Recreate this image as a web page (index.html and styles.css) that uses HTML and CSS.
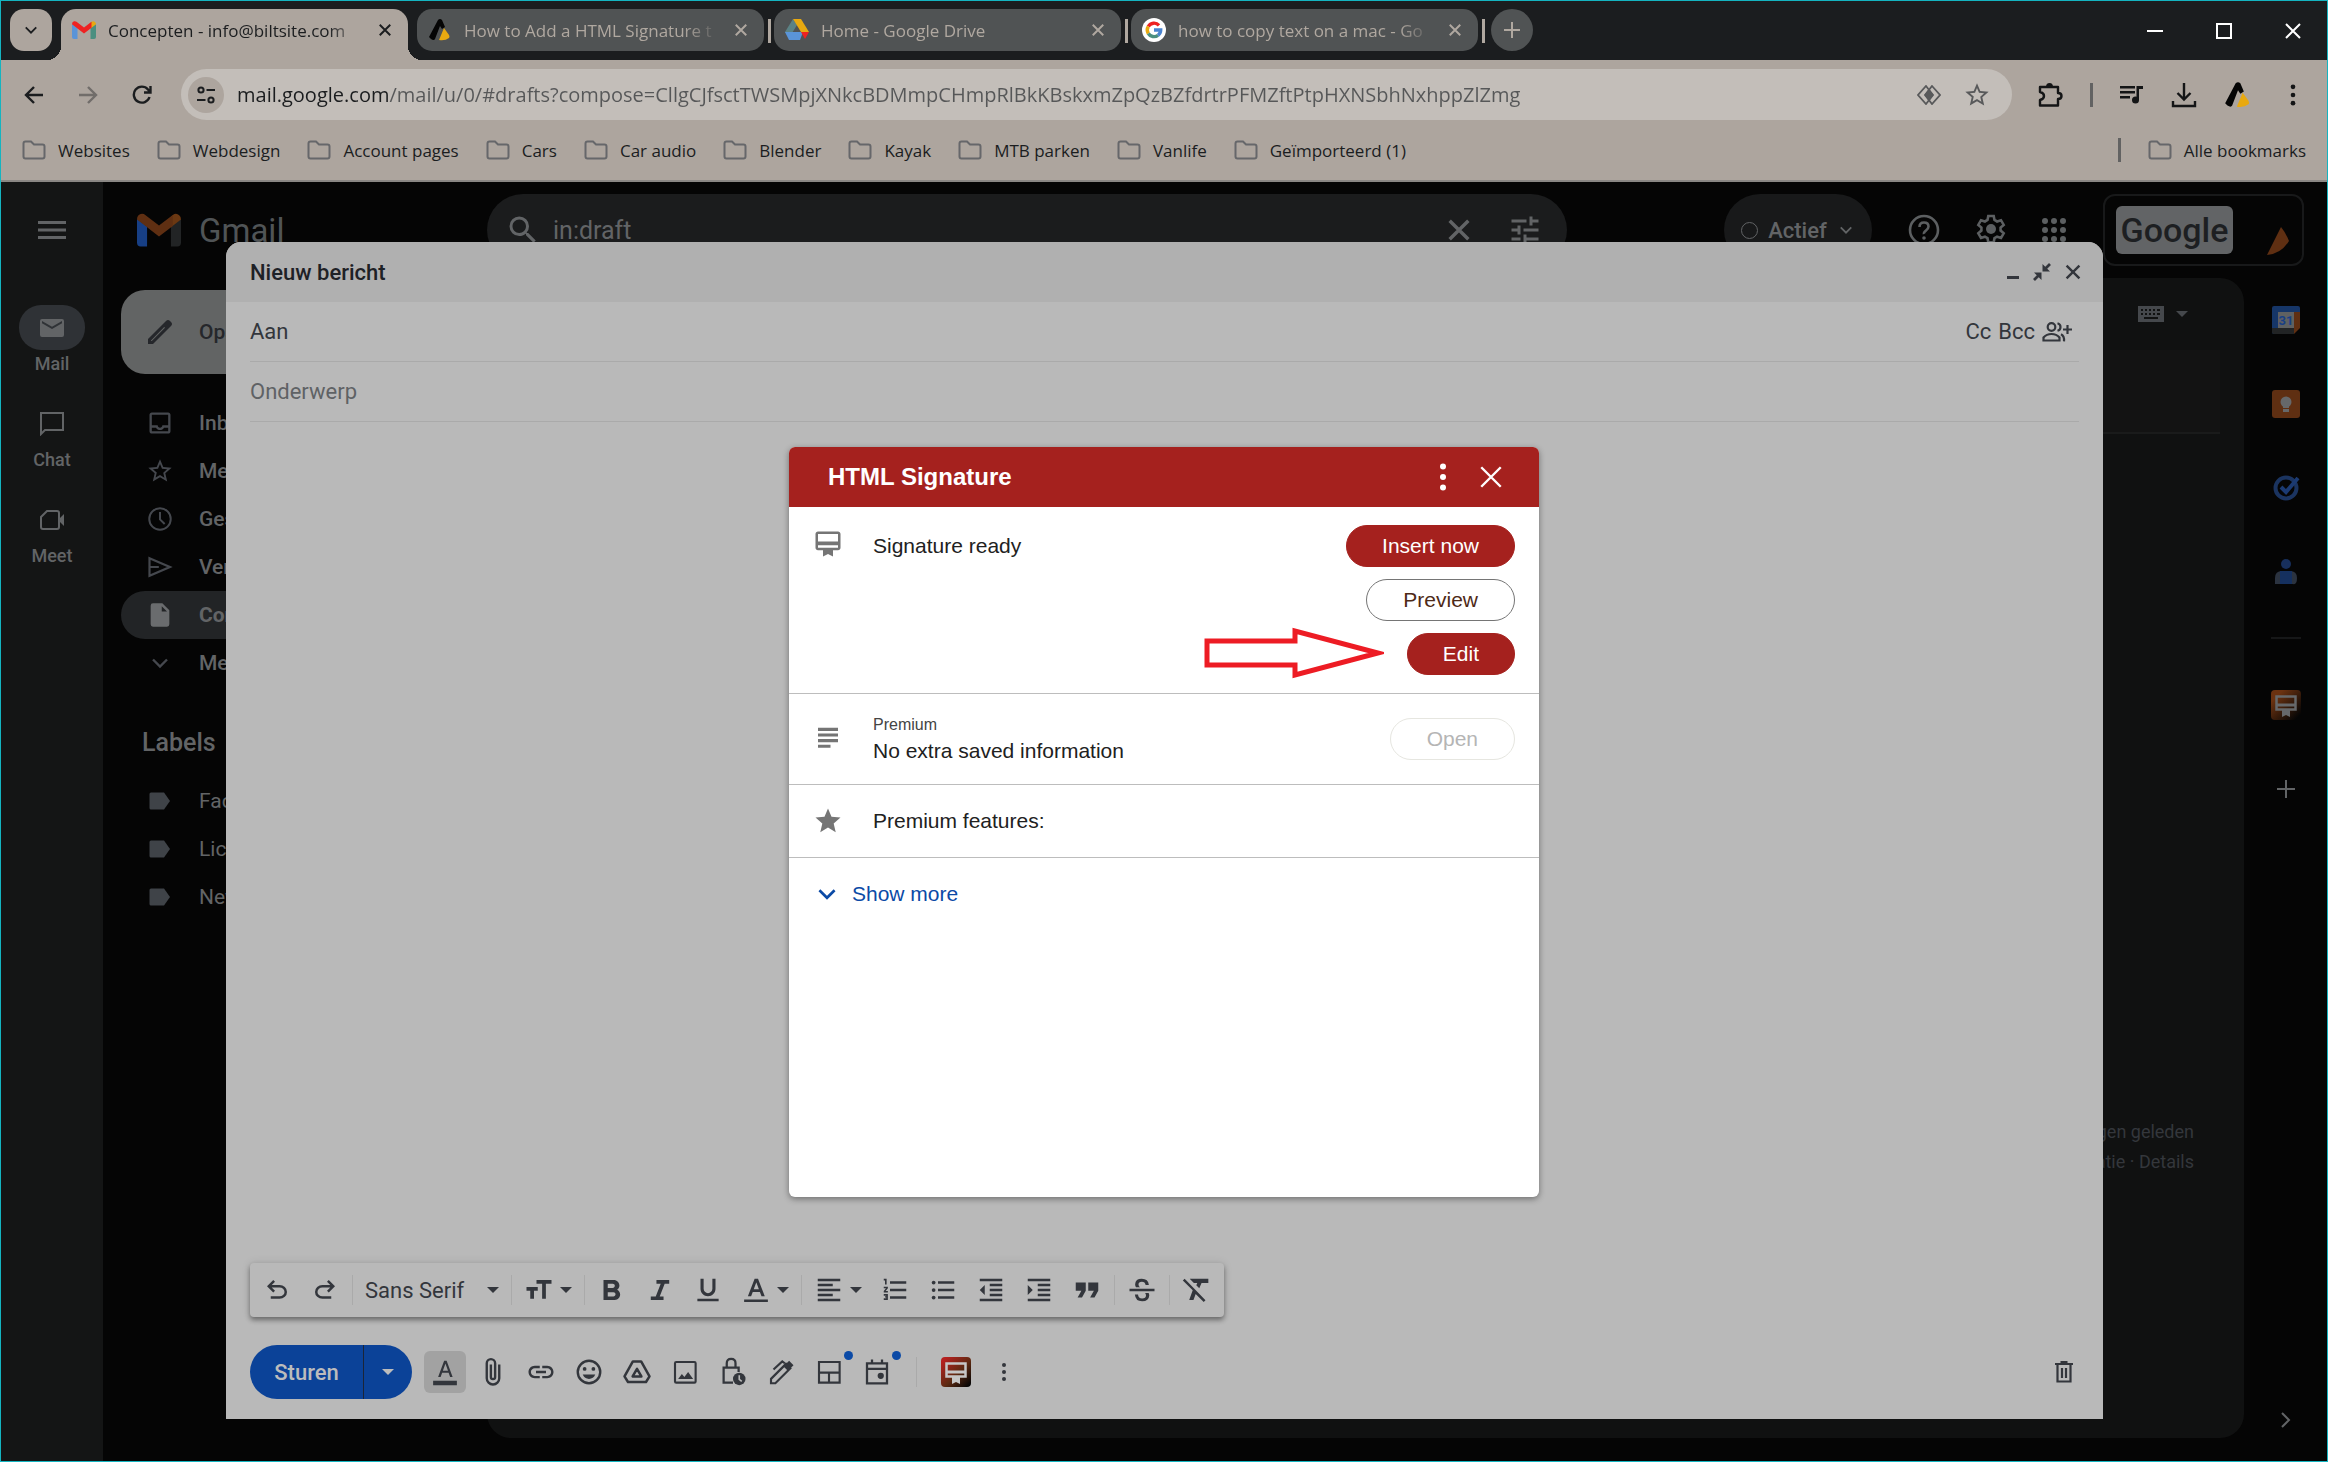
FILE: index.html
```html
<!DOCTYPE html>
<html lang="nl">
<head>
<meta charset="utf-8">
<meta name="viewport" content="width=device-width, initial-scale=1">
<title>Concepten - info@biltsite.com</title>
<link rel="stylesheet" href="styles.css">
</head>
<body>
<svg class="sprite" aria-hidden="true">
  <symbol id="x" viewBox="0 0 24 24"><path d="M5 5l14 14M19 5L5 19" fill="none" stroke="currentColor" stroke-width="2.6"/></symbol>
  <symbol id="x-thin" viewBox="0 0 24 24"><path d="M3 3l18 18M21 3L3 21" fill="none" stroke="currentColor" stroke-width="2.2"/></symbol>
  <symbol id="down" viewBox="0 0 24 24"><path d="M5 8.500l7 7 7-7" fill="none" stroke="currentColor" stroke-width="2.4"/></symbol>
  <symbol id="caret" viewBox="0 0 12 6"><path d="M0 0h12L6 6z"/></symbol>
  <symbol id="folder" viewBox="0 0 24 20"><path d="M1.500 16.500v-13q0-2 2-2h5.500l3 3h8.500q2 0 2 2v10q0 2-2 2h-17q-2 0-2-2z" fill="none" stroke="currentColor" stroke-width="2"/></symbol>
  <symbol id="dots" viewBox="0 0 24 24"><circle cx="12" cy="5" r="2"/><circle cx="12" cy="12" r="2"/><circle cx="12" cy="19" r="2"/></symbol>
  <symbol id="star" viewBox="0 0 24 24"><path d="M22 9.240l-7.190-.620L12 2 9.190 8.630 2 9.240l5.460 4.730L5.820 21 12 17.270 18.180 21l-1.630-7.030L22 9.240zM12 15.400l-3.760 2.270 1-4.280-3.320-2.880 4.380-.380L12 6.100l1.710 4.040 4.380.380-3.320 2.880 1 4.280L12 15.400z"/></symbol>
  <symbol id="star-full" viewBox="0 0 24 24"><path d="M12 17.270L18.180 21l-1.640-7.030L22 9.240l-7.190-.610L12 2 9.190 8.630 2 9.240l5.460 4.730L5.820 21z"/></symbol>
  <symbol id="brand" viewBox="0 0 24 24"><path d="M10 2q2-2 4 0l3 7-3 2-2-3-5 13q-1 2-4 0l-2-2z" fill="#050505"/><path d="M16 10l-5 12q6 1 10-2 1-1 0-3z" fill="#e8a910"/></symbol>
  <symbol id="gmail" viewBox="0 0 24 18"><path d="M0 3v13q0 2 2 2h3.500V7z" class="g-blue"/><path d="M24 3v13q0 2-2 2h-3.500V7z" class="g-green"/><path d="M18.500 7V1.800l1-1Q21.500-.6 23 1q1 .8 1 2.300L18.500 7.500z" class="g-yellow"/><path d="M0 3.300Q0 1 2 .3q1.500-.4 2.500.5L12 6.500 19.500.8v6L12 12.500 5.500 7.500z" class="g-red"/></symbol>
  <symbol id="badge" viewBox="0 0 24 24"><path d="M20 2H4c-1.100 0-2 .9-2 2v11c0 1.100.9 2 2 2h4v5l4-2 4 2v-5h4c1.100 0 2-.9 2-2V4c0-1.100-.9-2-2-2zm0 13H4v-2h16v2zm0-5H4V4h16v6z"/></symbol>
  <symbol id="sig" viewBox="0 0 30 30"><path class="sig-bg" d="M4 0h22q4 0 4 4v22q0 4-4 4H4q-4 0-4-4V4q0-4 4-4z"/><path d="M5.500 6.500h19v13h-19z" fill="none" stroke="currentColor" stroke-width="2.500"/><path d="M5 13.500h20v3H5zM11 20h8v7l-4-2-4 2z" fill="currentColor"/></symbol>
  <symbol id="search" viewBox="0 0 24 24"><path d="M15.500 14h-.79l-.28-.27A6.470 6.470 0 0 0 16 9.500 6.500 6.500 0 1 0 9.500 16c1.610 0 3.090-.59 4.230-1.570l.27.28v.79l5 4.990L20.490 19l-4.990-5zm-6 0C7.010 14 5 11.990 5 9.500S7.010 5 9.500 5 14 7.010 14 9.500 11.990 14 9.500 14z"/></symbol>
  <symbol id="tune" viewBox="0 0 24 24"><path d="M3 17v2h6v-2H3zM3 5v2h10V5H3zm10 16v-2h8v-2h-8v-2h-2v6h2zM7 9v2H3v2h4v2h2V9H7zm14 4v-2H11v2h10zm-6-4h2V7h4V5h-4V3h-2v6z"/></symbol>
  <symbol id="doc" viewBox="0 0 24 24"><path d="M14 2H6q-2 0-2 2v16q0 2 2 2h12q2 0 2-2V8zM13.500 4.500L18 9h-4.500z"/></symbol>
  <symbol id="tag" viewBox="0 0 24 24"><path d="M3 3.500h13L22 12l-6 8.500H3q-1.500 0-1.500-1.500V5q0-1.500 1.500-1.500z"/></symbol>
  <linearGradient id="sigfill" x1="0" y1="0" x2="1" y2="1"><stop offset=".1" stop-color="#b5201f"/><stop offset=".55" stop-color="#5e2a12"/><stop offset=".95" stop-color="#050505"/></linearGradient>
  <linearGradient id="sigfill-dim" x1="0" y1="0" x2="1" y2="1"><stop offset=".2" stop-color="#6b3210"/><stop offset=".9" stop-color="#050505"/></linearGradient>
</svg>

<header class="browser">
  <div class="tabstrip">
    <button class="tab-search" aria-label="Tabbladen zoeken"><svg width="18" height="18"><use href="#down"/></svg></button>
    <div class="tab tab-active">
      <svg class="gmail-bright" width="24" height="18"><use href="#gmail"/></svg>
      <span class="tab-title">Concepten - info@biltsite.com</span>
      <button aria-label="Sluiten"><svg width="18" height="18"><use href="#x"/></svg></button>
    </div>
    <div class="tab">
      <svg width="24" height="24"><use href="#brand"/></svg>
      <span class="tab-title">How to Add a HTML Signature t</span>
      <button aria-label="Sluiten"><svg width="18" height="18"><use href="#x"/></svg></button>
    </div>
    <i class="tab-sep"></i>
    <div class="tab">
      <svg width="24" height="22" viewBox="0 0 24 22"><path d="M8 0l4 6-8 13-4-6z" fill="#5b8285"/><path d="M8 0h8l8 13h-8z" fill="#e8a910"/><path d="M0 13h18l-3 8H4z" fill="#5a94d8"/><path d="M16 13h8l-4 7z" fill="#e22"/></svg>
      <span class="tab-title">Home - Google Drive</span>
      <button aria-label="Sluiten"><svg width="18" height="18"><use href="#x"/></svg></button>
    </div>
    <i class="tab-sep"></i>
    <div class="tab">
      <svg width="24" height="24" viewBox="0 0 24 24"><circle cx="12" cy="12" r="12" fill="#fff"/><g fill="none" stroke-width="3.400"><path d="M6.300 8.500A6.700 6.700 0 0 1 17 7.300" stroke="#e22"/><path d="M6.300 8.500a6.700 6.700 0 0 0 0 7" stroke="#e8a910"/><path d="M6.300 15.500a6.700 6.700 0 0 0 9.700 1.800" stroke="#4b8f80"/><path d="M12 12h6.700a6.700 6.700 0 0 1-2.700 5.300" stroke="#4a84d0"/></g></svg>
      <span class="tab-title">how to copy text on a mac - Go</span>
      <button aria-label="Sluiten"><svg width="18" height="18"><use href="#x"/></svg></button>
    </div>
    <i class="tab-sep"></i>
    <button class="new-tab" aria-label="Nieuw tabblad"><svg width="18" height="18" viewBox="0 0 18 18"><path d="M9 1v16M1 9h16" stroke="currentColor" stroke-width="2"/></svg></button>
    <div class="win">
      <button aria-label="Minimaliseren"><svg width="16" height="16" viewBox="0 0 16 16"><path d="M0 8h16" stroke="currentColor" stroke-width="2"/></svg></button>
      <button aria-label="Maximaliseren"><svg width="16" height="16" viewBox="0 0 16 16"><path d="M1 1h14v14H1z" fill="none" stroke="currentColor" stroke-width="2"/></svg></button>
      <button aria-label="Venster sluiten"><svg width="16" height="16" viewBox="0 0 16 16"><path d="M1 1l14 14M15 1L1 15" stroke="currentColor" stroke-width="2"/></svg></button>
    </div>
  </div>

  <div class="toolbar">
    <button class="tool" aria-label="Terug"><svg width="20" height="20" viewBox="0 0 20 20"><path d="M19 10H2M10 2l-8 8 8 8" fill="none" stroke="currentColor" stroke-width="2.400"/></svg></button>
    <button class="tool dim" aria-label="Vooruit"><svg width="20" height="20" viewBox="0 0 20 20"><path d="M1 10h17M10 2l8 8-8 8" fill="none" stroke="currentColor" stroke-width="2.400"/></svg></button>
    <button class="tool" aria-label="Opnieuw laden"><svg width="20" height="20" viewBox="0 0 20 20"><path d="M17.500 12A8 8 0 1 1 16 4.500l2 2.500M18.500 1v6.500H12" fill="none" stroke="currentColor" stroke-width="2.400"/></svg></button>
    <div class="omnibox">
      <button class="site-info" aria-label="Sitegegevens"><svg width="20" height="18" viewBox="0 0 20 18"><g fill="none" stroke="currentColor" stroke-width="2"><circle cx="5" cy="4" r="2.600"/><path d="M10.500 4H19M1 14h8.500"/><circle cx="15" cy="14" r="2.600"/></g></svg></button>
      <input class="url" type="text" aria-label="Adresbalk" value="mail.google.com/mail/u/0/#drafts?compose=CllgCJfsctTWSMpjXNkcBDMmpCHmpRlBkKBskxmZpQzBZfdrtrPFMZftPtpHXNSbhNxhppZlZmg">
      <svg width="24" height="20" viewBox="0 0 24 20"><g fill="none" stroke="currentColor" stroke-width="1.800"><path d="M9 1l7 9-7 9-8-9zM15 1l8 9-8 9-7-9z"/></g><path d="M12 4l4.500 6-4.500 6-4.500-6z"/></svg>
      <svg width="28" height="28"><use href="#star"/></svg>
    </div>
    <div class="actions">
      <svg width="26" height="26" viewBox="0 0 26 26"><path d="M3 5h18v6q3.500 0 3.500 3T21 17v6.500H3V18q4-1 4-4t-4-4z" fill="none" stroke="currentColor" stroke-width="2.400" stroke-linejoin="round"/><path d="M9 5q0-4 3.500-4T16 5z"/></svg>
      <i class="bar"></i>
      <svg width="24" height="20" viewBox="0 0 24 20"><path d="M0 1h15v2.500H0zM0 6h15v2.500H0zM0 11h10v2.500H0zM16.500 1H23v3h-4v11h-2.500z"/><circle cx="15.500" cy="15" r="3.500"/></svg>
      <svg width="26" height="26" viewBox="0 0 26 26"><path d="M13 1v16M6.500 11l6.500 6.500 6.500-6.500M2 19v5h22v-5" fill="none" stroke="currentColor" stroke-width="2.400"/></svg>
      <svg width="28" height="28"><use href="#brand"/></svg>
      <svg width="28" height="28"><use href="#dots"/></svg>
    </div>
  </div>

  <nav class="bookmarks">
    <a href="#"><svg width="24" height="20"><use href="#folder"/></svg>Websites</a>
    <a href="#"><svg width="24" height="20"><use href="#folder"/></svg>Webdesign</a>
    <a href="#"><svg width="24" height="20"><use href="#folder"/></svg>Account pages</a>
    <a href="#"><svg width="24" height="20"><use href="#folder"/></svg>Cars</a>
    <a href="#"><svg width="24" height="20"><use href="#folder"/></svg>Car audio</a>
    <a href="#"><svg width="24" height="20"><use href="#folder"/></svg>Blender</a>
    <a href="#"><svg width="24" height="20"><use href="#folder"/></svg>Kayak</a>
    <a href="#"><svg width="24" height="20"><use href="#folder"/></svg>MTB parken</a>
    <a href="#"><svg width="24" height="20"><use href="#folder"/></svg>Vanlife</a>
    <a href="#"><svg width="24" height="20"><use href="#folder"/></svg>Geïmporteerd (1)</a>
    <i class="bar"></i>
    <a href="#"><svg width="24" height="20"><use href="#folder"/></svg>Alle bookmarks</a>
  </nav>
</header>

<main class="app">
  <nav class="rail">
    <button class="burger" aria-label="Hoofdmenu"><svg width="28" height="20" viewBox="0 0 28 20"><path d="M0 2.500h28M0 10h28M0 17.500h28" stroke="currentColor" stroke-width="3"/></svg></button>
    <a class="rail-item current" href="#"><span class="rail-icon"><svg width="24" height="18" viewBox="0 0 24 18"><path d="M2 0h20q2 0 2 2v14q0 2-2 2H2q-2 0-2-2V2q0-2 2-2zm0 2v2.300l10 5.700 10-5.700V2l-10 5.700z"/></svg></span>Mail</a>
    <a class="rail-item" href="#"><span class="rail-icon"><svg width="24" height="24" viewBox="0 0 24 24"><path d="M1 22V1h22v17H5z" fill="none" stroke="currentColor" stroke-width="2"/></svg></span>Chat</a>
    <a class="rail-item" href="#"><span class="rail-icon"><svg width="24" height="20" viewBox="0 0 24 20"><path d="M7 1h10q2 0 2 2v14q0 2-2 2H3q-2 0-2-2V7z" fill="none" stroke="currentColor" stroke-width="2"/><path d="M18 10l6-6v12z"/></svg></span>Meet</a>
  </nav>

  <aside class="side">
    <div class="logo"><svg class="gmail-dim" width="44" height="34"><use href="#gmail"/></svg><span>Gmail</span></div>
    <button class="compose-btn"><svg width="28" height="28" viewBox="0 0 28 28"><path d="M2 26v-5L20 3q2-2 4 0l1 1q2 2 0 4L7 26zM5 22.500v.5h.8L19 9.800 18.200 9z" fill-rule="evenodd"/></svg>Opstellen</button>
    <ul class="nav">
      <li><a href="#"><svg width="28" height="28" viewBox="0 0 24 24"><path d="M19 3H5c-1.100 0-2 .9-2 2v14c0 1.100.9 2 2 2h14c1.100 0 2-.9 2-2V5c0-1.100-.9-2-2-2zm0 16H5v-3h3.560c.69 1.190 1.970 2 3.450 2s2.750-.81 3.450-2H19v3zm0-5h-4.990c0 1.100-.9 2-2 2s-2-.9-2-2H5V5h14v9z"/></svg>Inbox</a></li>
      <li><a href="#"><svg width="28" height="28"><use href="#star"/></svg>Met ster</a></li>
      <li><a href="#"><svg width="28" height="28" viewBox="0 0 24 24"><circle cx="12" cy="12" r="9.200" fill="none" stroke="currentColor" stroke-width="1.700"/><path d="M12 6v6.300l4 4" fill="none" stroke="currentColor" stroke-width="1.700"/></svg>Gesnoozed</a></li>
      <li><a href="#"><svg width="28" height="28" viewBox="0 0 24 24"><path d="M3 4.500L20.500 12 3 19.500V4.500zM3 12h8" fill="none" stroke="currentColor" stroke-width="1.900"/></svg>Verzonden</a></li>
      <li><a class="selected" href="#"><svg width="28" height="28"><use href="#doc"/></svg>Concepten</a></li>
      <li><a href="#"><svg width="24" height="24"><use href="#down"/></svg>Meer</a></li>
    </ul>
    <h2>Labels</h2>
    <ul class="nav">
      <li><a href="#"><svg width="26" height="24"><use href="#tag"/></svg>Facturen</a></li>
      <li><a href="#"><svg width="26" height="24"><use href="#tag"/></svg>Licenties</a></li>
      <li><a href="#"><svg width="26" height="24"><use href="#tag"/></svg>Newsletters</a></li>
    </ul>
  </aside>

  <section class="mail">
    <div class="mail-top">
      <div class="search">
        <svg width="36" height="36"><use href="#search"/></svg>
        <input type="text" aria-label="Zoeken in e-mail" value="in:draft">
        <svg width="32" height="32"><use href="#x"/></svg>
        <svg class="tune" width="36" height="36"><use href="#tune"/></svg>
      </div>
      <button class="status"><i></i>Actief<svg width="18" height="18"><use href="#down"/></svg></button>
      <div class="top-icons">
        <svg width="32" height="32" viewBox="0 0 32 32"><circle cx="16" cy="16" r="14" fill="none" stroke="currentColor" stroke-width="2.600"/><path d="M11.500 13q0-4.500 4.500-4.500t4.500 4q0 2-2.500 4t-2 3.500" fill="none" stroke="currentColor" stroke-width="2.600"/><circle cx="16" cy="24" r="1.800"/></svg>
        <svg width="32" height="32" viewBox="0 0 32 32"><path d="M13.300 2h5.400l.8 4 2.600 1.500L26 6.200l2.700 4.700-3.100 2.700v3l3.100 2.700L26 24l-3.900-1.300-2.600 1.500-.8 4h-5.400l-.8-4-2.600-1.500L6 24l-2.700-4.700 3.100-2.700v-3l-3.100-2.700L6 6.200l3.900 1.300L12.500 6z" fill="none" stroke="currentColor" stroke-width="2.600"/><circle cx="16" cy="15" r="5"/></svg>
        <svg width="24" height="24" viewBox="0 0 24 24"><circle cx="3" cy="3" r="3"/><circle cx="12" cy="3" r="3"/><circle cx="21" cy="3" r="3"/><circle cx="3" cy="12" r="3"/><circle cx="12" cy="12" r="3"/><circle cx="21" cy="12" r="3"/><circle cx="3" cy="21" r="3"/><circle cx="12" cy="21" r="3"/><circle cx="21" cy="21" r="3"/></svg>
      </div>
      <div class="account"><span>Google</span><svg width="22" height="28" viewBox="0 0 22 28"><path d="M14 0q5 6 8 14-8 13-22 14z" fill="#5f2f12"/></svg></div>
    </div>
    <div class="mail-body">
      <div class="panel">
        <div class="panel-tools"><svg width="26" height="16" viewBox="0 0 26 16"><path d="M0 0h26v16H0zM3 3v2h2V3zm4 0v2h2V3zm4 0v2h2V3zm4 0v2h2V3zm4 0v2h3V3zM3 7v2h2V7zm4 0v2h2V7zm4 0v2h2V7zm4 0v2h2V7zm4 0v2h3V7zM6 11v2h14v-2z" fill-rule="evenodd"/></svg><svg width="12" height="6"><use href="#caret"/></svg></div>
        <div class="panel-row"></div>
        <p class="activity">3 dagen geleden<br>locatie · Details</p>
      </div>
      <nav class="apps">
        <svg width="28" height="28" viewBox="0 0 28 28"><path d="M2 0h24q2 0 2 2v4H6v22H2q-2 0-2-2V2q0-2 2-2z" fill="#163668"/><path d="M22 6h6v16l-6 6z" fill="#5f2f12"/><path d="M0 22h22v6H2q-2 0-2-2z" fill="#222425"/><path d="M6 6h16v16H6z" fill="#5f6162"/><text x="14" y="19" text-anchor="middle" class="cal">31</text></svg>
        <svg width="28" height="28" viewBox="0 0 28 28"><rect width="28" height="28" rx="3" fill="#5f2f12"/><circle cx="14" cy="12" r="5.500" fill="#66686a"/><path d="M11 15h6v3h-6zM11 19h6v3h-6z" fill="#66686a"/></svg>
        <svg width="28" height="28" viewBox="0 0 28 28"><circle cx="14" cy="14" r="10.500" fill="none" stroke="#1b3460" stroke-width="4"/><path d="M9 13l5 5L26 4" fill="none" stroke="#1b3a72" stroke-width="4"/></svg>
        <svg width="28" height="28" viewBox="0 0 28 28"><circle cx="14" cy="6" r="5" fill="#172f5c"/><path d="M3 26v-6q0-7 7-7h8q7 0 7 7t-4 6z" fill="#2b3340"/><path d="M8 26V13h12v13z" fill="#15305f"/></svg>
        <hr>
        <svg class="sig-dim" width="30" height="30"><use href="#sig"/></svg>
        <svg class="plus" width="18" height="18" viewBox="0 0 18 18"><path d="M9 0v18M0 9h18" stroke="currentColor" stroke-width="2"/></svg>
        <svg class="expand" width="10" height="16" viewBox="0 0 10 16"><path d="M1 1l7 7-7 7" fill="none" stroke="currentColor" stroke-width="2"/></svg>
      </nav>
    </div>
  </section>

  <section class="compose" aria-label="Nieuw bericht">
    <header>
      <h1>Nieuw bericht</h1>
      <button aria-label="Minimaliseren"><svg width="18" height="18" viewBox="0 0 18 18"><path d="M3 14.500h12" stroke="currentColor" stroke-width="3"/></svg></button>
      <button aria-label="Volledig scherm sluiten"><svg width="18" height="18" viewBox="0 0 18 18"><path d="M17 1l-6 6M1 17l6-6" stroke="currentColor" stroke-width="2.800"/><path d="M9.500 1v7.500H17zM8.500 17V9.500H1z"/></svg></button>
      <button aria-label="Sluiten"><svg width="22" height="22"><use href="#x"/></svg></button>
    </header>
    <div class="field">
      <label for="to">Aan</label><input id="to" type="text">
      <a href="#">Cc</a><a href="#">Bcc</a>
      <svg width="30" height="20" viewBox="0 0 30 20"><g fill="none" stroke="currentColor" stroke-width="2.200"><circle cx="9.500" cy="5" r="3.800"/><path d="M1.500 18.500v-3q3-3.500 8-3.500t8 3.500v3zM15.500 1.200q3 .8 3 3.800t-3 3.800M19 12.300q3.500 1.700 3 7M25.500 3v9M21 7.500h9"/></g></svg>
    </div>
    <div class="field"><input class="subject" type="text" aria-label="Onderwerp" placeholder="Onderwerp"></div>
    <div class="text" contenteditable="true" role="textbox" aria-label="Berichttekst"></div>

    <div class="format">
      <button aria-label="Ongedaan maken"><svg width="30" height="30" viewBox="0 0 24 24"><path d="M7 19v-2h7.100q1.575 0 2.738-1T18 13.500t-1.162-2.500-2.738-1H7.800l2.600 2.600L9 14 4 9l5-5 1.400 1.400L7.800 8h6.300q2.425 0 4.163 1.575T20 13.500t-1.737 3.925T14.100 19z"/></svg></button>
      <button aria-label="Opnieuw"><svg width="30" height="30" viewBox="0 0 24 24"><path d="M9.900 19q-2.425 0-4.163-1.575T4 13.500t1.737-3.925T9.900 8h6.300l-2.600-2.600L15 4l5 5-5 5-1.400-1.400 2.600-2.600H9.900q-1.575 0-2.738 1T6 13.500 7.162 16t2.738 1H17v2z"/></svg></button>
      <i></i>
      <label class="font"><select aria-label="Lettertype"><option>Sans Serif</option></select><svg width="12" height="6"><use href="#caret"/></svg></label>
      <i></i>
      <button class="wide" aria-label="Grootte"><svg width="30" height="30" viewBox="0 0 24 24"><path d="M10 4v3h4.500v12h3V7H22V4zM2 9.500v3h3V19h3v-6.500h3v-3z"/></svg><svg width="12" height="6"><use href="#caret"/></svg></button>
      <i></i>
      <button aria-label="Vet"><svg width="34" height="34" viewBox="0 0 24 24"><path d="M15.600 11.790c.97-.67 1.650-1.770 1.650-2.790 0-2.260-1.750-4-4-4H6v14h8.040c2.090 0 3.710-1.700 3.710-3.790 0-1.520-.86-2.820-2.150-3.420zM9 7.500h3.500c.83 0 1.500.67 1.500 1.500s-.67 1.500-1.500 1.500H9v-3zm4 9H9v-3h4c.83 0 1.500.67 1.500 1.500s-.67 1.500-1.500 1.500z"/></svg></button>
      <button aria-label="Cursief"><svg width="34" height="34" viewBox="0 0 24 24"><path d="M9.500 5v2.500h3L9 16.500H5.500V19h9v-2.500h-2.700l3.500-9h3.200V5z"/></svg></button>
      <button aria-label="Onderstrepen"><svg width="30" height="30" viewBox="0 0 24 24"><path d="M12 17c3.310 0 6-2.690 6-6V3h-2.500v8c0 1.930-1.570 3.500-3.500 3.500S8.500 12.930 8.500 11V3H6v8c0 3.310 2.690 6 6 6zm-8.500 2v2h17v-2z"/></svg></button>
      <button class="wide" aria-label="Tekstkleur"><svg width="30" height="30" viewBox="0 0 24 24"><path d="M2.500 19.500h19v2h-19zM5.500 17h2.600l1.300-3.500h5.700l1.300 3.500H19L13.600 3h-2.700zm4.700-5.700L12.200 6h.1l2 5.300z"/></svg><svg width="12" height="6"><use href="#caret"/></svg></button>
      <i></i>
      <button class="wide" aria-label="Uitlijnen"><svg width="30" height="30" viewBox="0 0 24 24"><path d="M3 21v-2h18v2zm0-4v-2h12v2zm0-4v-2h18v2zm0-4V7h12v2zm0-4V3h18v2z"/></svg><svg width="12" height="6"><use href="#caret"/></svg></button>
      <button aria-label="Genummerde lijst"><svg width="30" height="30" viewBox="0 0 24 24"><path d="M3 16.500h2v.5H4v1h1v.5H3v1.500h3.300v-4.800H3zm1-9h1.300V3H3v1.300h1zm-1 3h1.800L3 12.800V14h3.300v-1.300H4.500l1.800-2.200V9.300H3zM8 5v2h13V5zm0 14h13v-2H8zm0-6h13v-2H8z"/></svg></button>
      <button aria-label="Lijst met opsommingstekens"><svg width="30" height="30" viewBox="0 0 24 24"><circle cx="4.500" cy="6" r="1.500"/><circle cx="4.500" cy="12" r="1.500"/><circle cx="4.500" cy="18" r="1.500"/><path d="M8 5h13v2H8zM8 11h13v2H8zM8 17h13v2H8z"/></svg></button>
      <button aria-label="Minder inspringen"><svg width="30" height="30" viewBox="0 0 24 24"><path d="M11 17h10v-2H11v2zm-8-5l4 4V8l-4 4zm0 9h18v-2H3v2zM3 3v2h18V3H3zm8 6h10V7H11v2zm0 4h10v-2H11v2z"/></svg></button>
      <button aria-label="Meer inspringen"><svg width="30" height="30" viewBox="0 0 24 24"><path d="M3 21h18v-2H3v2zM3 8v8l4-4-4-4zm8 9h10v-2H11v2zM3 3v2h18V3H3zm8 6h10V7H11v2zm0 4h10v-2H11v2z"/></svg></button>
      <button aria-label="Citaat"><svg width="30" height="30" viewBox="0 0 24 24"><path d="M4.500 18l3-5.500H3V6h8v6.500L8 18zM14.500 18l3-5.500H13V6h8v6.500L18 18z"/></svg></button>
      <i></i>
      <button aria-label="Doorhalen"><svg width="30" height="30" viewBox="0 0 24 24"><path d="M2 11h20v2H2zM17.500 8h-2.600q-.4-2.700-3-2.700-2.700 0-2.700 2.200 0 1.500 1.300 2.300H7.200Q6.500 8.800 6.500 7.300 6.800 3 11.800 3q5.200 0 5.700 5zM6.300 15.500h2.500q.3 3.200 3.300 3.200 3.100 0 3.100-2.400 0-1-.7-1.900h2.800q.5 1 .5 2-.3 4.600-5.700 4.600-5.400-.2-5.800-5.500z"/></svg></button>
      <i></i>
      <button aria-label="Opmaak verwijderen"><svg width="34" height="34" viewBox="0 0 24 24"><path d="M3.270 4L2 5.270l6.970 6.970L6.500 19h3l1.570-4.160L16.730 20.500 18 19.230zM7 4v.18L9.820 7h2.400l-.72 1.680 2.100 2.100L15.210 7H20V4z"/></svg></button>
    </div>

    <footer>
      <div class="send"><button class="send-main">Sturen</button><button class="send-more" aria-label="Meer verzendopties"><svg width="12" height="6"><use href="#caret"/></svg></button></div>
      <button class="on" aria-label="Opmaakopties"><svg width="30" height="30" viewBox="0 0 24 24"><path d="M2.500 19h19v3.500h-19zM6.500 16h2l1.200-3.400h5.200l1.200 3.400h2L13.300 3h-2zm3.800-5l2-5.700h.1l2 5.700z"/></svg></button>
      <button aria-label="Bijlagen toevoegen"><svg width="30" height="30" viewBox="0 0 24 24"><path d="M17 6v11a5 5 0 0 1-10 0V5a3.300 3.300 0 0 1 6.700 0v11a1.700 1.700 0 0 1-3.400 0V6" fill="none" stroke="currentColor" stroke-width="1.900"/></svg></button>
      <button aria-label="Link invoegen"><svg width="30" height="30" viewBox="0 0 24 24"><path d="M3.900 12c0-1.710 1.390-3.100 3.100-3.100h4V7H7c-2.760 0-5 2.240-5 5s2.240 5 5 5h4v-1.900H7c-1.710 0-3.100-1.390-3.100-3.100zM8 13h8v-2H8v2zm9-6h-4v1.900h4c1.710 0 3.100 1.390 3.100 3.100s-1.390 3.100-3.100 3.100h-4V17h4c2.760 0 5-2.240 5-5s-2.240-5-5-5z"/></svg></button>
      <button aria-label="Emoji invoegen"><svg width="30" height="30" viewBox="0 0 24 24"><circle cx="12" cy="12" r="9" fill="none" stroke="currentColor" stroke-width="1.900"/><circle cx="8.500" cy="9.500" r="1.500"/><circle cx="15.500" cy="9.500" r="1.500"/><path d="M7 14h10q-1.500 3.500-5 3.500T7 14z"/></svg></button>
      <button aria-label="Bestanden uit Drive"><svg width="30" height="30" viewBox="0 0 24 24"><path d="M8.700 3.500h6.600L22 15.500 19.200 20H4.800L2 15.500zM12 9.500l-3.500 6h7z" fill="none" stroke="currentColor" stroke-width="2" stroke-linejoin="round"/></svg></button>
      <button aria-label="Foto invoegen"><svg width="30" height="30" viewBox="0 0 24 24"><rect x="4" y="4" width="16.500" height="16.500" rx="1" fill="none" stroke="currentColor" stroke-width="1.700"/><path d="M6.500 17.500l3-4 2 2.500 3-4 4 5.500z"/></svg></button>
      <button aria-label="Vertrouwelijke modus"><svg width="30" height="30" viewBox="0 0 24 24"><path d="M12 20.500H4.500v-12h12V12M7 8V5q0-3.500 3.500-3.500T14 5v3" fill="none" stroke="currentColor" stroke-width="1.800"/><circle cx="17" cy="17.500" r="5"/><path d="M17 14.500v3.300l2 1.700" fill="none" stroke="#b9b9b9" stroke-width="1.300"/></svg></button>
      <button aria-label="Handtekening invoegen"><svg width="30" height="30" viewBox="0 0 24 24"><path d="M4 17.500L16 5.500l3.500 3.500-12 12H4zM6 10l7-6.500 2 1.500" fill="none" stroke="currentColor" stroke-width="1.700"/><path d="M14 7.500L18.500 3 22 6.500 17.500 11z"/></svg></button>
      <button aria-label="Lay-out selecteren"><svg width="30" height="30" viewBox="0 0 24 24"><path d="M4 4h16.500v16.500H4zM4 12.500h16.500M12 12.500v8" fill="none" stroke="currentColor" stroke-width="1.700"/></svg><b class="dot"></b></button>
      <button aria-label="Tijdstip instellen"><svg width="30" height="30" viewBox="0 0 24 24"><path d="M4 5h16v16H4zM4 9.500h16M8 2v3M16 2v3" fill="none" stroke="currentColor" stroke-width="1.800"/><circle cx="15" cy="15" r="2.500"/></svg><b class="dot"></b></button>
      <i></i>
      <button aria-label="HTML Signature"><svg class="sig" width="30" height="30"><use href="#sig"/></svg></button>
      <button aria-label="Meer opties"><svg width="24" height="24"><use href="#dots"/></svg></button>
      <button class="trash" aria-label="Concept weggooien"><svg width="18" height="22" viewBox="0 0 18 22"><path d="M2.500 3v17.500h13V3M0 3h18M5.500 1.200h7M7 7v10M11 7v10" fill="none" stroke="currentColor" stroke-width="2.200"/></svg></button>
    </footer>
  </section>

  <div class="stage">
    <section class="dialog" role="dialog" aria-label="HTML Signature">
      <header>
        <h2>HTML Signature</h2>
        <button aria-label="Menu"><svg width="36" height="36"><use href="#dots"/></svg></button>
        <button aria-label="Sluiten"><svg width="26" height="26"><use href="#x-thin"/></svg></button>
      </header>
      <div class="row ready">
        <svg width="30" height="30"><use href="#badge"/></svg>
        <p>Signature ready</p>
        <div class="buttons">
          <button class="pill solid">Insert now</button>
          <button class="pill">Preview</button>
          <button class="pill solid">Edit</button>
        </div>
        <svg class="arrow" width="180" height="52" viewBox="0 0 180 52"><path d="M3 14h88V4l83 22-83 22V38H3z" fill="#fff" stroke="#ed1c24" stroke-width="5"/></svg>
      </div>
      <div class="row premium">
        <svg width="30" height="30" viewBox="0 0 24 24"><path d="M4 3h16v2.500H4zM4 7.500h16V10H4zM4 12h16v2.500H4zM4 16.500h10V19H4z"/></svg>
        <p><small>Premium</small>No extra saved information</p>
        <button class="pill" disabled>Open</button>
      </div>
      <div class="row features">
        <svg width="30" height="30"><use href="#star-full"/></svg>
        <p>Premium features:</p>
      </div>
      <button class="more"><svg width="26" height="26"><use href="#down"/></svg>Show more</button>
    </section>
  </div>
</main>
</body>
</html>
```
FILE: styles.css
```css
* { box-sizing: border-box; }

body {
  margin: 0;
  min-height: 100vh;
  display: flex;
  flex-direction: column;
  border: 1px solid #14b4c0;
  background: #050505;
  font-family: Roboto, "Liberation Sans", sans-serif;
  font-size: 21px;
}

button, input, select {
  font: inherit;
  color: inherit;
  background: none;
  border: 0;
  padding: 0;
  margin: 0;
  outline: 0;
}

button { display: flex; align-items: center; justify-content: center; flex: none; }
a { color: inherit; text-decoration: none; }
ul { list-style: none; margin: 0; padding: 0; }
h1, h2, p { margin: 0; }
svg { flex: none; fill: currentColor; }
.sprite { position: absolute; width: 0; height: 0; }

/* Browser window */
.browser {
  background: #ada59e;
  color: #1b1d1f;
  font-family: "Open Sans", "Noto Sans", sans-serif;
  border-bottom: 2px solid #8a8784;
}

.tabstrip {
  display: flex;
  align-items: flex-start;
  height: 59px;
  padding: 8px 0 0 9px;
  background: #1b1d1f;
  color: #b0a8a0;
}

.tab-search, .new-tab { width: 42px; height: 42px; border-radius: 14px; background: #ada59e; color: #1b1d1f; }
.new-tab { border-radius: 50%; background: #505354; color: #b0a8a0; margin-left: 3px; }

.tab {
  display: flex;
  align-items: center;
  gap: 12px;
  flex: 0 1 347px;
  min-width: 0;
  height: 42px;
  padding: 0 14px 0 11px;
  border-radius: 15px;
  background: #505354;
  font-size: 17px;
}

.tab-active {
  position: relative;
  height: 51px;
  margin: 0 9px;
  padding-bottom: 9px;
  border-radius: 15px 15px 0 0;
  background: #ada59e;
  color: #1b1d1f;
}

.tab-active::before, .tab-active::after {
  content: "";
  position: absolute;
  bottom: 0;
  width: 14px;
  height: 14px;
}
.tab-active::before { right: 100%; background: radial-gradient(circle at 0 0, transparent 14px, #ada59e 14px); }
.tab-active::after { left: 100%; background: radial-gradient(circle at 100% 0, transparent 14px, #ada59e 14px); }

.tab-title {
  flex: 1;
  overflow: hidden;
  white-space: nowrap;
  padding-top: 2px;
  line-height: 24px;
  -webkit-mask-image: linear-gradient(90deg, #000 86%, transparent);
  mask-image: linear-gradient(90deg, #000 86%, transparent);
}

.tab-sep { width: 3px; height: 24px; margin: 10px 3px 0 4px; background: #b0a8a0; }

.g-blue { fill: var(--g-blue, #5a94d8); }
.g-red { fill: var(--g-red, #e22); }
.g-yellow { fill: var(--g-yellow, #e8a910); }
.g-green { fill: var(--g-green, #4b8f80); }
.sig-bg { fill: var(--sig-bg, url(#sigfill)); }

.win { display: flex; margin-left: auto; color: #fff; }
.win button { width: 69px; height: 44px; }

.toolbar { display: flex; align-items: center; height: 69px; padding: 0 20px 0 6px; }
.tool { width: 54px; height: 42px; }
.dim { color: #716d6a; }

.omnibox {
  display: flex;
  align-items: center;
  flex: 1;
  height: 51px;
  margin-left: 12px;
  padding: 0 21px 0 7px;
  border-radius: 26px;
  background: #c3beb9;
  color: #58595a;
  gap: 22px;
}
.site-info { width: 36px; height: 36px; border-radius: 50%; background: #ada59e; color: #1b1d1f; margin-right: -9px; }
.url {
  flex: 1;
  min-width: 0;
  font-size: 20px;
  line-height: 36px;
  background: linear-gradient(90deg, #1b1d1f 152px, #565758 152px);
  -webkit-background-clip: text;
  background-clip: text;
  -webkit-text-fill-color: transparent;
}

.actions { display: flex; align-items: center; gap: 27px; margin-left: 25px; color: #141516; }
.bar { width: 3px; height: 24px; background: #626262; }

.bookmarks { display: flex; align-items: center; height: 51px; padding: 0 21px 9px; gap: 27px; font-size: 17px; }
.bookmarks a { display: flex; align-items: center; gap: 12px; white-space: nowrap; }
.bookmarks svg { color: #66676a; }
.bookmarks .bar { margin-left: auto; }

/* Gmail behind the shade */
.app {
  position: relative;
  flex: 1;
  display: flex;
  background: #050505;
  color: #626466;
}

.rail {
  display: flex;
  flex-direction: column;
  align-items: center;
  width: 102px;
  background: #141515;
  font-size: 18px;
}
.burger { height: 36px; margin: 30px 0 57px; }
.rail-item { display: flex; flex-direction: column; align-items: center; height: 96px; line-height: 28px; font-weight: 500; }
.rail-icon { display: grid; place-items: center; width: 66px; height: 45px; border-radius: 22px; }
.current .rail-icon { background: #2f3236; }

.side { width: 384px; padding: 30px 0 0 18px; }
.logo { display: flex; align-items: center; gap: 18px; height: 36px; padding-left: 16px; font-size: 33px; color: #505456; }
.gmail-dim { --g-blue: #173f85; --g-red: #5f2f12; --g-yellow: #6b3812; --g-green: #222425; }
.compose-btn {
  justify-content: flex-start;
  gap: 25px;
  width: 212px;
  height: 84px;
  margin: 42px 0 25px;
  padding-left: 25px;
  border-radius: 24px;
  background: #626464;
  color: #25272b;
  font-weight: 500;
}
.nav a { display: flex; align-items: center; width: 366px; height: 48px; border-radius: 24px; padding-left: 25px; font-weight: 500; }
.nav svg { width: 28px; margin-right: 25px; color: #45484e; }
.nav .selected { background: #222426; font-weight: 700; }
.nav .selected svg { color: #6a6c6e; }
.side h2 { margin: 32px 0 10px 21px; font-size: 25px; line-height: 48px; font-weight: 500; }
.side h2 + .nav a { font-weight: 400; }
.side h2 + .nav svg { color: #3f4348; }

.mail { flex: 1; display: flex; flex-direction: column; min-width: 0; }
.mail-top { display: flex; align-items: flex-start; padding: 12px 23px 0 0; }
.search {
  display: flex;
  align-items: center;
  width: 1080px;
  height: 72px;
  padding: 0 24px 0 18px;
  border-radius: 36px;
  background: #1b1c1d;
  font-size: 25px;
}
.search input { flex: 1; margin-left: 12px; min-width: 0; }
.tune { margin-left: 32px; }
.status { width: 148px; height: 72px; border-radius: 36px; background: #18191a; gap: 10px; margin-left: auto; font-size: 22px; font-weight: 500; }
.status i { width: 17px; height: 17px; border: 1px solid #626466; border-radius: 50%; }
.top-icons { display: flex; align-items: center; gap: 35px; height: 72px; margin: 0 37px 0 36px; color: #5c5f61; }
.account {
  display: flex;
  align-items: center;
  justify-content: space-between;
  width: 201px;
  height: 72px;
  padding: 0 13px 0 11px;
  border: 2px solid #18191a;
  border-radius: 12px;
}
.account span { width: 117px; border-radius: 6px; background: #626466; color: #1d1f22; font-size: 34px; font-weight: 500; line-height: 48px; text-align: center; }
.account svg { margin-top: 22px; }

.mail-body { flex: 1; display: flex; margin-top: 12px; }
.panel { flex: 1; display: flex; flex-direction: column; margin-bottom: 23px; border-radius: 24px; background: #101111; }
.panel-tools { display: flex; justify-content: flex-end; align-items: center; gap: 12px; height: 72px; padding-right: 56px; color: #45484c; }
.panel-row { height: 84px; margin-right: 24px; background: #131313; border-bottom: 2px solid #1a1b1b; }
.activity { margin: auto 50px 261px auto; text-align: right; font-size: 18px; line-height: 30px; color: #34373c; }
.apps { display: flex; flex-direction: column; align-items: center; gap: 56px; width: 83px; padding: 28px 0 33px; }
.apps hr { width: 30px; height: 2px; margin: -5px 0; border: 0; background: #161718; }
.cal { font: 700 13px Roboto, sans-serif; fill: #173f85; }
.plus { margin-top: 4px; }
.expand { margin-top: auto; }
.sig-dim { --sig-bg: url(#sigfill-dim); color: #66686a; }

/* Compose window */
.compose {
  position: absolute;
  inset: 60px 224px 42px 225px;
  display: flex;
  flex-direction: column;
  border-radius: 15px 15px 0 0;
  background: #b9b9b9;
  color: #33363c;
  font-size: 22px;
  overflow: hidden;
}
.compose > header { display: flex; align-items: center; gap: 11px; height: 60px; padding: 0 19px 0 24px; background: #b0b0b0; }
.compose h1 { flex: 1; font-size: 22px; font-weight: 500; color: #1e2126; }
.field { display: flex; align-items: center; gap: 7px; height: 60px; margin: 0 24px; padding-right: 7px; border-bottom: 1px solid #aaa; }
.field input { flex: 1; }
.subject::placeholder { color: #5f6265; opacity: 1; }
.text { flex: 1; outline: 0; }

.format {
  align-self: flex-start;
  display: flex;
  align-items: center;
  height: 54px;
  margin-left: 24px;
  padding: 0 3px;
  border-radius: 4px;
  box-shadow: 0 3px 5px rgba(0, 0, 0, .4), 0 0 10px rgba(0, 0, 0, .1);
}
.format button { width: 48px; height: 48px; }
.format .wide { width: 66px; justify-content: flex-start; padding-left: 9px; gap: 6px; }
.format i { width: 1px; height: 30px; margin: 0 3px; background: #aaa; }
.font { display: flex; align-items: center; width: 152px; padding: 0 9px; }
.font select { flex: 1; appearance: none; }

.compose footer { display: flex; align-items: center; gap: 6px; height: 54px; margin: 28px 24px 20px; }
.compose footer > button { position: relative; width: 42px; height: 42px; border-radius: 6px; }
.compose footer .on { background: #a2a2a2; }
.compose footer i { width: 1px; height: 30px; margin: 0 12px; background: #aaa; }
.compose footer .trash { margin-left: auto; margin-right: -6px; }
.send { display: flex; height: 54px; margin-right: 6px; border-radius: 27px; overflow: hidden; background: #0b4298; color: #bcbcbc; }
.send-main { width: 113px; font-weight: 500; }
.send-more { width: 49px; border-left: 1px solid #1b2537; }
.dot { position: absolute; top: 0; right: -3px; width: 9px; height: 9px; border-radius: 50%; background: #0b4aa6; }
.sig { color: #c6c6c6; }

/* Add-on dialog */
.stage { position: absolute; inset: 0; display: grid; place-items: center; pointer-events: none; }
.dialog {
  display: flex;
  flex-direction: column;
  width: 750px;
  height: 750px;
  border-radius: 6px;
  background: #fff;
  color: #212121;
  font-family: "Liberation Sans", Arial, sans-serif;
  font-size: 21px;
  box-shadow: 0 2px 6px rgba(0, 0, 0, .4);
  pointer-events: auto;
}
.dialog header { display: flex; align-items: center; height: 60px; padding: 0 35px 0 39px; border-radius: 6px 6px 0 0; background: #a5211e; color: #fff; gap: 17px; }
.dialog h2 { flex: 1; font-size: 24px; font-weight: 700; }
.row { position: relative; display: flex; align-items: center; padding: 0 24px; border-bottom: 1px solid #bdbdbd; }
.row > svg:first-child { margin-right: 30px; color: #757575; }
.row p { flex: 1; line-height: 28px; }
.row small { display: block; font-size: 16px; line-height: 24px; color: #444; }
.ready { height: 187px; align-items: flex-start; padding-top: 18px; }
.ready > svg:first-child { margin-top: 4px; }
.ready p { padding-top: 7px; }
.buttons { display: flex; flex-direction: column; align-items: flex-end; gap: 12px; }
.pill { height: 42px; padding: 0 36px; border: 1px solid #757575; border-radius: 21px; color: #4e2a17; }
.solid { padding: 0 35px; border-color: #a5211e; background: #a5211e; color: #fff; }
.pill:disabled { border-color: #e6e6e0; color: #b5b5b5; }
.arrow { position: absolute; right: 155px; bottom: 14px; }
.premium { height: 91px; }
.features { height: 73px; }
.more { align-self: flex-start; gap: 12px; height: 73px; padding-left: 25px; color: #0b4aa6; }
```
